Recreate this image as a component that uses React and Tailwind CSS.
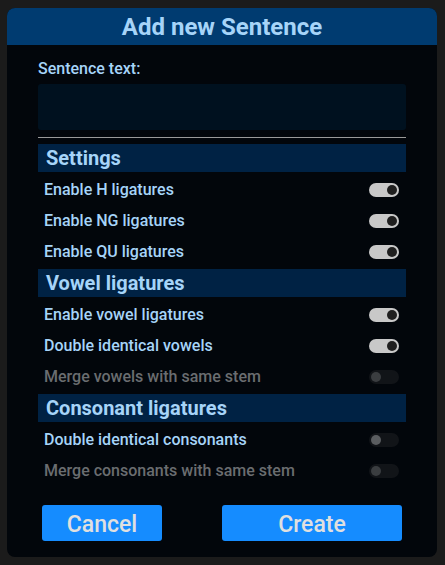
const Toggle = ({ on, disabled }) => (
  <div
    className={`flex h-[14px] w-[30px] items-center rounded-full px-[2px] ${
      on ? "justify-end bg-[#c8c8c8]" : "justify-start bg-[#111418]"
    }`}
  >
    <div
      className={`h-[10px] w-[10px] rounded-full ${
        on ? "bg-[#1f1f1f]" : disabled ? "bg-[#3a3d40]" : "bg-[#5a5d60]"
      }`}
    />
  </div>
);

const SectionHeader = ({ children, first }) => (
  <div
    className={`${first ? "mt-[6px]" : "mt-[2px]"} flex h-[28px] items-center bg-[#002244] px-2 text-[20px] font-bold text-[#a6d4f8]`}
  >
    {children}
  </div>
);

const Row = ({ label, on, disabled }) => (
  <div className="flex h-[31px] items-center justify-between pl-[6px] pr-[7px]">
    <span className={`text-[16px] font-medium ${disabled ? "text-[#6a6d70]" : "text-[#a6d4f8]"}`}>{label}</span>
    <Toggle on={on} disabled={disabled} />
  </div>
);

export default function App() {
  return (
    <div
      className="h-[565px] w-[445px] bg-[#1b1b1b] pl-[7px] pt-[8px]"
      style={{ fontFamily: "Roboto, 'Noto Sans', sans-serif" }}
    >
      <div className="flex h-[549px] w-[430px] flex-col overflow-hidden rounded-[8px] bg-[#02060b]">
        <div className="flex h-[37px] items-center justify-center bg-[#003b70] text-[24px] font-bold text-[#a6d4f8]">
          Add new Sentence
        </div>
        <div className="flex flex-col px-[31px] pt-[12px]">
          <label className="text-[16px] font-medium text-[#a6d4f8]">Sentence text:</label>
          <div className="mt-[3px] h-[46px] rounded-[3px] bg-[#00111f]" />
          <div className="mt-[7px] h-px bg-[#9a9a9a]" />
          <SectionHeader first>Settings</SectionHeader>
          <div className="pt-[2px]">
            <Row label="Enable H ligatures" on />
            <Row label="Enable NG ligatures" on />
            <Row label="Enable QU ligatures" on />
          </div>
          <SectionHeader>Vowel ligatures</SectionHeader>
          <div className="pt-[2px]">
            <Row label="Enable vowel ligatures" on />
            <Row label="Double identical vowels" on />
            <Row label="Merge vowels with same stem" disabled />
          </div>
          <SectionHeader>Consonant ligatures</SectionHeader>
          <div className="pt-[2px]">
            <Row label="Double identical consonants" />
            <Row label="Merge consonants with same stem" disabled />
          </div>
          <div className="mt-[19px] flex justify-between px-[4px]">
            <button className="h-[36px] w-[120px] rounded-[3px] bg-[#158cff] pt-[3px] text-[23px] font-medium leading-none text-[#e0e0e0]">
              Cancel
            </button>
            <button className="h-[36px] w-[180px] rounded-[3px] bg-[#158cff] pt-[3px] text-[23px] font-medium leading-none text-[#e0e0e0]">
              Create
            </button>
          </div>
        </div>
      </div>
    </div>
  );
}
